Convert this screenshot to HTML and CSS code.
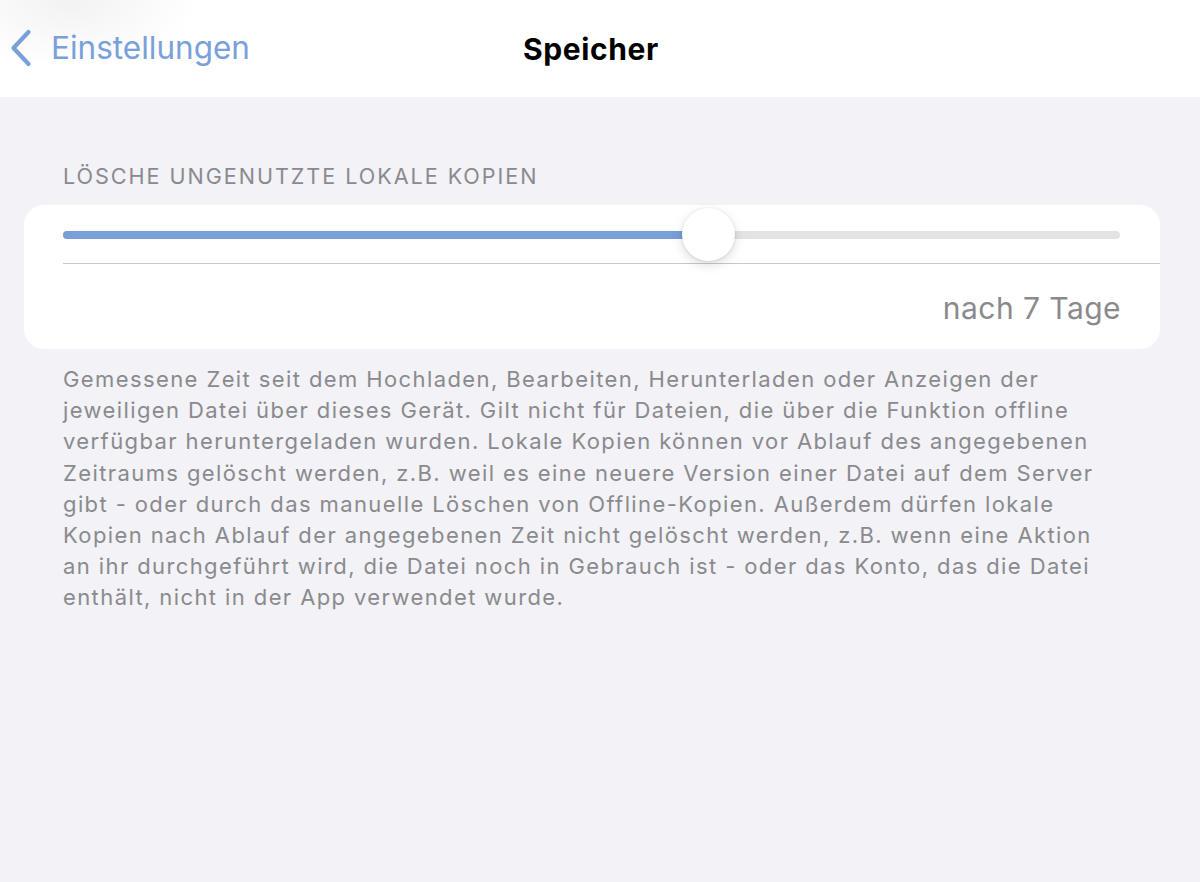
FILE: index.html
```html
<!DOCTYPE html>
<html lang="de">
<head>
<meta charset="utf-8">
<title>Speicher</title>
<link rel="stylesheet" href="styles.css">
</head>
<body>
<header class="nav">
  <div class="glow"></div>
  <a class="back" href="#">
    <svg class="chev" width="22" height="38" viewBox="0 0 22 38"><path d="M18.5 3 L3.5 19 L18.5 35" fill="none" stroke="#7aa0da" stroke-width="4.2" stroke-linecap="round" stroke-linejoin="round"/></svg>
    <span class="back-label">Einstellungen</span>
  </a>
  <h1 class="title">Speicher</h1>
</header>
<main class="content">
  <div class="section-label">LÖSCHE UNGENUTZTE LOKALE KOPIEN</div>
  <div class="card">
    <div class="slider-row">
      <div class="track">
        <div class="fill" style="width: 60%"></div>
        <div class="thumb" style="left: 61.1%"></div>
      </div>
    </div>
    <div class="value-row">nach 7 Tage</div>
  </div>
  <p class="footer">Gemessene Zeit seit dem Hochladen, Bearbeiten, Herunterladen oder Anzeigen der<br>jeweiligen Datei über dieses Gerät. Gilt nicht für Dateien, die über die Funktion offline<br>verfügbar heruntergeladen wurden. Lokale Kopien können vor Ablauf des angegebenen<br>Zeitraums gelöscht werden, z.B. weil es eine neuere Version einer Datei auf dem Server<br>gibt - oder durch das manuelle Löschen von Offline-Kopien. Außerdem dürfen lokale<br>Kopien nach Ablauf der angegebenen Zeit nicht gelöscht werden, z.B. wenn eine Aktion<br>an ihr durchgeführt wird, die Datei noch in Gebrauch ist - oder das Konto, das die Datei<br>enthält, nicht in der App verwendet wurde.</p>
</main>
</body>
</html>
```

FILE: styles.css
```css
* { box-sizing: border-box; }
html, body { margin: 0; padding: 0; }
body {
  background: #f2f2f7;
  font-family: Inter, "Noto Sans", "Liberation Sans", sans-serif;
  width: 1200px;
  height: 882px;
  overflow: hidden;
}
.nav {
  position: relative;
  height: 97px;
  background: #ffffff;
  display: flex;
  align-items: center;
  justify-content: center;
  overflow: hidden;
}
.glow {
  position: absolute;
  left: -60px;
  top: -70px;
  width: 260px;
  height: 140px;
  border-radius: 50%;
  background: radial-gradient(ellipse at center, rgba(0,0,0,0.05) 0%, rgba(0,0,0,0) 70%);
}
.back {
  position: absolute;
  left: 10px;
  top: 29px;
  display: flex;
  align-items: center;
  gap: 19px;
  text-decoration: none;
  color: #7aa0da;
}
.back-label {
  font-size: 31.5px;
  letter-spacing: 0;
  line-height: 38px;
}
.title {
  margin: 0;
  font-size: 30px;
  font-weight: 700;
  color: #000;
  letter-spacing: 0.6px;
  padding-right: 18px;
}
.content {
  padding: 0 40px 0 24px;
}
.section-label {
  margin-top: 66px;
  padding-left: 39px;
  font-size: 21.6px;
  line-height: 26px;
  color: #8a8a8e;
  letter-spacing: 1.95px;
  white-space: nowrap;
}
.card {
  margin-top: 16px;
  background: #ffffff;
  border-radius: 20px;
  padding-left: 39px;
}
.slider-row {
  height: 59px;
  border-bottom: 1px solid #c8c8cc;
  padding-right: 40px;
  padding-top: 26px;
}
.track {
  position: relative;
  height: 8px;
  border-radius: 4px;
  background: #e3e3e6;
}
.fill {
  height: 8px;
  border-radius: 4px;
  background: #799fd8;
}
.thumb {
  position: absolute;
  top: -23px;
  width: 53px;
  height: 53px;
  margin-left: -26.5px;
  border-radius: 50%;
  background: #ffffff;
  box-shadow: 0 4px 12px rgba(0,0,0,0.13), 0 0.5px 3px rgba(0,0,0,0.12);
}
.value-row {
  height: 85px;
  display: flex;
  align-items: center;
  justify-content: flex-end;
  padding-right: 39px;
  padding-top: 2px;
  font-size: 30px;
  color: #8a8a8e;
  letter-spacing: 0.45px;
}
.footer {
  margin: 15px 0 0 0;
  padding-left: 39px;
  font-size: 22px;
  line-height: 31.2px;
  color: #8a8a8e;
  letter-spacing: 1.4px;
  white-space: nowrap;
}
```
